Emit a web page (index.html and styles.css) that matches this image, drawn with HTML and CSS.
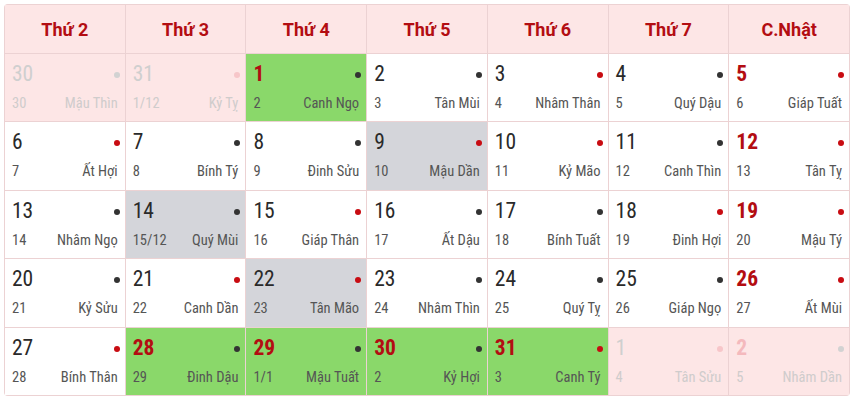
FILE: index.html
```html
<!DOCTYPE html>
<html lang="vi">
<head>
<meta charset="utf-8">
<link rel="stylesheet" href="styles.css">
</head>
<body>
<div class="cal">
  <div class="hd">Thứ 2</div><div class="hd">Thứ 3</div><div class="hd">Thứ 4</div><div class="hd">Thứ 5</div><div class="hd">Thứ 6</div><div class="hd">Thứ 7</div><div class="hd">C.Nhật</div>

  <div class="c off"><div class="top"><span class="n">30</span><i class="d dk"></i></div><div class="lu"><span>30</span><span>Mậu Thìn</span></div></div>
  <div class="c off"><div class="top"><span class="n">31</span><i class="d rd"></i></div><div class="lu"><span>1/12</span><span>Kỷ Tỵ</span></div></div>
  <div class="c gr"><div class="top"><span class="n red">1</span><i class="d dk"></i></div><div class="lu"><span>2</span><span>Canh Ngọ</span></div></div>
  <div class="c"><div class="top"><span class="n">2</span><i class="d dk"></i></div><div class="lu"><span>3</span><span>Tân Mùi</span></div></div>
  <div class="c"><div class="top"><span class="n">3</span><i class="d rd"></i></div><div class="lu"><span>4</span><span>Nhâm Thân</span></div></div>
  <div class="c"><div class="top"><span class="n">4</span><i class="d dk"></i></div><div class="lu"><span>5</span><span>Quý Dậu</span></div></div>
  <div class="c"><div class="top"><span class="n red">5</span><i class="d rd"></i></div><div class="lu"><span>6</span><span>Giáp Tuất</span></div></div>

  <div class="c"><div class="top"><span class="n">6</span><i class="d rd"></i></div><div class="lu"><span>7</span><span>Ất Hợi</span></div></div>
  <div class="c"><div class="top"><span class="n">7</span><i class="d dk"></i></div><div class="lu"><span>8</span><span>Bính Tý</span></div></div>
  <div class="c"><div class="top"><span class="n">8</span><i class="d dk"></i></div><div class="lu"><span>9</span><span>Đinh Sửu</span></div></div>
  <div class="c gy"><div class="top"><span class="n">9</span><i class="d rd"></i></div><div class="lu"><span>10</span><span>Mậu Dần</span></div></div>
  <div class="c"><div class="top"><span class="n">10</span><i class="d rd"></i></div><div class="lu"><span>11</span><span>Kỷ Mão</span></div></div>
  <div class="c"><div class="top"><span class="n">11</span><i class="d dk"></i></div><div class="lu"><span>12</span><span>Canh Thìn</span></div></div>
  <div class="c"><div class="top"><span class="n red">12</span><i class="d rd"></i></div><div class="lu"><span>13</span><span>Tân Tỵ</span></div></div>

  <div class="c"><div class="top"><span class="n">13</span><i class="d dk"></i></div><div class="lu"><span>14</span><span>Nhâm Ngọ</span></div></div>
  <div class="c gy"><div class="top"><span class="n">14</span><i class="d dk"></i></div><div class="lu"><span>15/12</span><span>Quý Mùi</span></div></div>
  <div class="c"><div class="top"><span class="n">15</span><i class="d rd"></i></div><div class="lu"><span>16</span><span>Giáp Thân</span></div></div>
  <div class="c"><div class="top"><span class="n">16</span><i class="d dk"></i></div><div class="lu"><span>17</span><span>Ất Dậu</span></div></div>
  <div class="c"><div class="top"><span class="n">17</span><i class="d dk"></i></div><div class="lu"><span>18</span><span>Bính Tuất</span></div></div>
  <div class="c"><div class="top"><span class="n">18</span><i class="d rd"></i></div><div class="lu"><span>19</span><span>Đinh Hợi</span></div></div>
  <div class="c"><div class="top"><span class="n red">19</span><i class="d rd"></i></div><div class="lu"><span>20</span><span>Mậu Tý</span></div></div>

  <div class="c"><div class="top"><span class="n">20</span><i class="d dk"></i></div><div class="lu"><span>21</span><span>Kỷ Sửu</span></div></div>
  <div class="c"><div class="top"><span class="n">21</span><i class="d rd"></i></div><div class="lu"><span>22</span><span>Canh Dần</span></div></div>
  <div class="c gy"><div class="top"><span class="n">22</span><i class="d rd"></i></div><div class="lu"><span>23</span><span>Tân Mão</span></div></div>
  <div class="c"><div class="top"><span class="n">23</span><i class="d dk"></i></div><div class="lu"><span>24</span><span>Nhâm Thìn</span></div></div>
  <div class="c"><div class="top"><span class="n">24</span><i class="d dk"></i></div><div class="lu"><span>25</span><span>Quý Tỵ</span></div></div>
  <div class="c"><div class="top"><span class="n">25</span><i class="d dk"></i></div><div class="lu"><span>26</span><span>Giáp Ngọ</span></div></div>
  <div class="c"><div class="top"><span class="n red">26</span><i class="d rd"></i></div><div class="lu"><span>27</span><span>Ất Mùi</span></div></div>

  <div class="c"><div class="top"><span class="n">27</span><i class="d rd"></i></div><div class="lu"><span>28</span><span>Bính Thân</span></div></div>
  <div class="c gr"><div class="top"><span class="n red">28</span><i class="d dk"></i></div><div class="lu"><span>29</span><span>Đinh Dậu</span></div></div>
  <div class="c gr"><div class="top"><span class="n red">29</span><i class="d dk"></i></div><div class="lu"><span>1/1</span><span>Mậu Tuất</span></div></div>
  <div class="c gr"><div class="top"><span class="n red">30</span><i class="d dk"></i></div><div class="lu"><span>2</span><span>Kỷ Hợi</span></div></div>
  <div class="c gr"><div class="top"><span class="n red">31</span><i class="d rd"></i></div><div class="lu"><span>3</span><span>Canh Tý</span></div></div>
  <div class="c off"><div class="top"><span class="n">1</span><i class="d rd"></i></div><div class="lu"><span>4</span><span>Tân Sửu</span></div></div>
  <div class="c off"><div class="top"><span class="n red">2</span><i class="d dk"></i></div><div class="lu"><span>5</span><span>Nhâm Dần</span></div></div>
</div>
</body>
</html>
```

FILE: styles.css
```css
html, body {
  margin: 0;
  padding: 0;
  background: #ffffff;
}
body {
  padding: 4px;
  font-family: Roboto, "Liberation Sans", sans-serif;
}
.cal {
  width: 846px;
  height: 392px;
  box-sizing: border-box;
  display: grid;
  grid-template-columns: repeat(7, 1fr);
  grid-template-rows: 48px repeat(5, 1fr);
  gap: 1px;
  padding: 1px;
  background: #ecd2d3;
  border-radius: 4px;
  overflow: hidden;
}
.hd {
  background: #fde6e6;
  color: #b30d12;
  font-weight: 700;
  font-size: 18px;
  display: flex;
  align-items: center;
  justify-content: center;
}
.c {
  background: #ffffff;
  padding: 8px 5px 0 7px;
  display: flex;
  flex-direction: column;
}
.c.gr { background: #8ad86a; }
.c.gy { background: #d4d5da; }
.c.off { background: #fde6e6; }
.top {
  display: flex;
  align-items: center;
  justify-content: space-between;
  height: 24px;
}
.n {
  font-size: 21.5px;
  font-stretch: 87.5%;
  color: #2a2a2a;
  line-height: 24px;
}
.n.red {
  color: #b30d12;
  font-weight: 700;
}
.d {
  width: 6px;
  height: 6px;
  border-radius: 50%;
  display: block;
  margin-top: 2px;
}
.d.dk { background: #333333; }
.d.rd { background: #c80c12; }
.lu {
  margin-top: 9px;
  padding-right: 2px;
  display: flex;
  justify-content: space-between;
  font-size: 14.5px;
  font-stretch: 87.5%;
  line-height: 18px;
  color: #555555;
}
.off .n { color: #cfcfcf; }
.off .n.red { color: #f4b9bd; font-weight: 700; }
.off .lu { color: #cfcccc; }
.off .d.dk { background: #d2d2d2; }
.off .d.rd { background: #f7c6c9; }
```
